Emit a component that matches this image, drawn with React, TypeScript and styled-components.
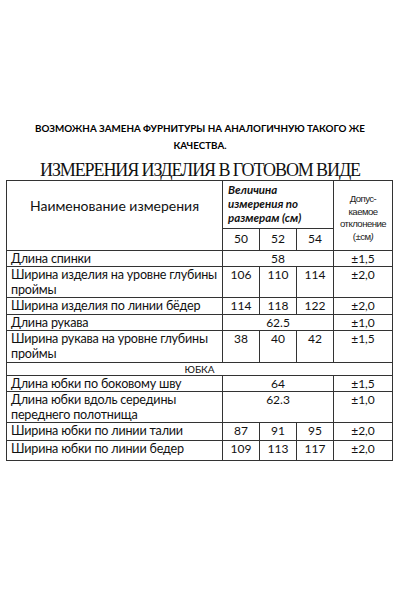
import styled, { createGlobalStyle } from 'styled-components';

const GlobalStyle = createGlobalStyle`
  html, body {
    margin: 0;
    padding: 0;
    background: #ffffff;
  }
  body {
    font-family: Lato, "Open Sans", sans-serif;
    color: #111111;
  }
`;

type Row = {
  name: string[];
  values: string[] | string;
  tol: string;
  height: number;
};

const topRows: Row[] = [
  { name: ['Длина спинки'], values: '58', tol: '±1,5', height: 16 },
  { name: ['Ширина изделия на уровне глубины', 'проймы'], values: ['106', '110', '114'], tol: '±2,0', height: 30 },
  { name: ['Ширина изделия по линии бёдер'], values: ['114', '118', '122'], tol: '±2,0', height: 17 },
  { name: ['Длина рукава'], values: '62.5', tol: '±1,0', height: 14 },
  { name: ['Ширина рукава на уровне глубины', 'проймы'], values: ['38', '40', '42'], tol: '±1,5', height: 32 },
];

const skirtRows: Row[] = [
  { name: ['Длина юбки по боковому шву'], values: '64', tol: '±1,5', height: 16 },
  { name: ['Длина юбки  вдоль середины', 'переднего полотнища'], values: '62.3', tol: '±1,0', height: 30 },
  { name: ['Ширина юбки по линии талии'], values: ['87', '91', '95'], tol: '±2,0', height: 18 },
  { name: ['Ширина юбки по линии бедер'], values: ['109', '113', '117'], tol: '±2,0', height: 20 },
];

const colWidths = [216, 37, 37, 37, 59];

function DataRow({ row }: { row: Row }) {
  return (
    <Tr $h={row.height}>
      <NameCell>
        {row.name.map((line, i) => (
          <Line key={i}>{line}</Line>
        ))}
      </NameCell>
      {typeof row.values === 'string' ? (
        <ValueCell colSpan={3}>{row.values}</ValueCell>
      ) : (
        row.values.map((v) => <ValueCell key={v}>{v}</ValueCell>)
      )}
      <ValueCell>{row.tol}</ValueCell>
    </Tr>
  );
}

export default function App() {
  return (
    <>
      <GlobalStyle />
      <Page>
        <Notice>
          ВОЗМОЖНА ЗАМЕНА ФУРНИТУРЫ НА АНАЛОГИЧНУЮ ТАКОГО ЖЕ
          <br />
          КАЧЕСТВА.
        </Notice>
        <Title>ИЗМЕРЕНИЯ ИЗДЕЛИЯ В ГОТОВОМ ВИДЕ</Title>
        <Table>
          <colgroup>
            {colWidths.map((w, i) => (
              <Col key={i} $w={w} />
            ))}
          </colgroup>
          <tbody>
            <Tr $h={48}>
              <HeadName rowSpan={2}>Наименование измерения</HeadName>
              <HeadSizes colSpan={3}>
                Величина
                <br />
                измерения по
                <br />
                размерам (см)
              </HeadSizes>
              <HeadTol rowSpan={2}>
                Допус-
                <br />
                каемое
                <br />
                отклонение
                <br />
                (±см<i>)</i>
              </HeadTol>
            </Tr>
            <Tr $h={22}>
              <SizeCell>50</SizeCell>
              <SizeCell>52</SizeCell>
              <SizeCell>54</SizeCell>
            </Tr>
            {topRows.map((r) => (
              <DataRow key={r.name[0]} row={r} />
            ))}
            <Tr $h={13}>
              <SectionCell colSpan={5}>ЮБКА</SectionCell>
            </Tr>
            {skirtRows.map((r) => (
              <DataRow key={r.name[0]} row={r} />
            ))}
          </tbody>
        </Table>
      </Page>
    </>
  );
}

const Page = styled.div`
  width: 400px;
  height: 600px;
  padding-top: 120px;
  box-sizing: border-box;
`;

const Notice = styled.div`
  font-family: Lato, "Open Sans", sans-serif;
  font-weight: 700;
  font-size: 9.8px;
  line-height: 17px;
  text-align: center;
  color: #000;
`;

const Title = styled.div`
  margin-top: 7px;
  font-family: "Liberation Serif", "Times New Roman", serif;
  font-size: 18px;
  line-height: 19px;
  letter-spacing: -1.1px;
  text-align: center;
  color: #111;
`;

const Table = styled.table`
  margin-left: 6px;
  width: 386px;
  table-layout: fixed;
  border-collapse: collapse;
  border: 1px solid #333;

  td {
    border: 1px solid #333;
    padding: 0;
    overflow: hidden;
  }
`;

const Col = styled.col<{ $w: number }>`
  width: ${(p) => p.$w}px;
`;

const Tr = styled.tr<{ $h: number }>`
  height: ${(p) => p.$h}px;
`;

const HeadName = styled.td`
  font-size: 14px;
  text-align: center;
  vertical-align: top;
  padding-top: 16px !important;
`;

const HeadSizes = styled.td`
  font-size: 11.5px;
  font-weight: 700;
  font-style: italic;
  line-height: 14px;
  text-align: left;
  vertical-align: top;
  padding: 2px 0 0 5px !important;
`;

const HeadTol = styled.td`
  font-family: "Liberation Sans", Arial, sans-serif;
  font-size: 9.6px;
  line-height: 12.7px;
  letter-spacing: -0.55px;
  text-align: center;
  vertical-align: top;
  padding-top: 12px !important;
  color: #222;
`;

const SizeCell = styled.td`
  font-size: 12px;
  text-align: center;
  vertical-align: top;
  padding-top: 2px !important;
`;

const NameCell = styled.td`
  font-size: 12.6px;
  line-height: 15px;
  letter-spacing: -0.2px;
  vertical-align: top;
  padding: 0 0 0 4px !important;
  white-space: nowrap;
`;

const Line = styled.div``;

const ValueCell = styled.td`
  font-size: 12px;
  line-height: 15px;
  text-align: center;
  vertical-align: top;
`;

const SectionCell = styled.td`
  font-size: 10px;
  line-height: 12px;
  text-align: center;
  vertical-align: top;
`;
